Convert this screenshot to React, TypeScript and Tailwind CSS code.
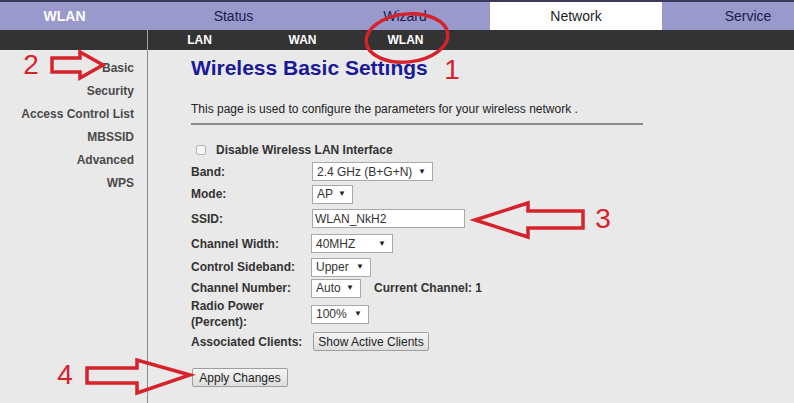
const FONT = "font-['Liberation_Sans',Arial,sans-serif]";

function FakeSelect({ value, width }: { value: string; width: string }) {
  return (
    <div
      className={`${width} h-[19px] flex items-center justify-between border border-[#a9a9a9] bg-white pl-[4px] pr-[6px] text-[12px] text-[#333]`}
    >
      <span>{value}</span>
      <span className="text-[8px] text-[#222]">▼</span>
    </div>
  );
}

function GrayButton({ label, width }: { label: string; width: string }) {
  return (
    <div
      className={`${width} h-[19px] flex items-center justify-center rounded-[2px] border border-[#9e9e9e] bg-gradient-to-b from-[#f6f6f6] to-[#dddddd] text-[12px] text-[#222]`}
    >
      {label}
    </div>
  );
}

function Row({ label, h, children }: { label: React.ReactNode; h: string; children?: React.ReactNode }) {
  return (
    <div className={`flex items-center ${h}`}>
      <div className="w-[120px] text-[12px] font-bold leading-[16px] text-[#333]">{label}</div>
      {children}
    </div>
  );
}

const sideLinks = ["Basic", "Security", "Access Control List", "MBSSID", "Advanced", "WPS"];

export default function App() {
  return (
    <div className={`relative h-[403px] w-[794px] overflow-hidden bg-[#e9e9e9] ${FONT}`}>
      {/* top tabs */}
      <div className="flex h-[30px] border-t-2 border-[#3a3a5a] bg-[#9999cc] text-[14px] leading-[28px] whitespace-nowrap">
        <div className="w-[147px] shrink-0 pr-[18px] text-center font-bold text-white">WLAN</div>
        <div className="w-[173px] shrink-0 text-center text-[#1c1c4c]">Status</div>
        <div className="w-[170px] shrink-0 text-center text-[#1c1c4c]">Wizard</div>
        <div className="w-[172px] shrink-0 bg-white text-center text-[#222]">Network</div>
        <div className="w-[172px] shrink-0 text-center text-[#1c1c4c]">Service</div>
      </div>

      {/* sub tabs */}
      <div className="flex h-[20px] bg-[#333333] text-[12px] font-bold leading-[20px] text-white">
        <div className="w-[148px] shrink-0 border-r border-[#a0a0a0]" />
        <div className="w-[103px] text-center">LAN</div>
        <div className="w-[103px] text-center">WAN</div>
        <div className="w-[103px] text-center">WLAN</div>
      </div>

      <div className="flex h-[353px]">
        {/* sidebar */}
        <div className="w-[148px] shrink-0 border-r border-[#8c8c8c] pt-[7px] pr-[13px] text-right">
          {sideLinks.map((l) => (
            <div key={l} className="text-[12px] font-bold leading-[23px] text-[#4a4a4a]">
              {l}
            </div>
          ))}
        </div>

        {/* main */}
        <div className="flex-1 pl-[43px] pt-[7px]">
          <h1 className="text-[21px] font-bold leading-[22px] text-[#1a1a99]">Wireless Basic Settings</h1>
          <p className="mt-[22px] text-[12px] leading-[16px] text-[#222]">
            This page is used to configure the parameters for your wireless network .
          </p>
          <div className="mt-[6px] h-[2px] w-[452px] bg-[#8a8a8a]" />

          <div className="mt-[14px]">
            <div className="flex h-[22px] items-center pl-[5px]">
              <div className="h-[10px] w-[10px] rounded-[2px] border border-[#b5b5b5] bg-[#f5f5f5]" />
              <span className="ml-[10px] text-[12px] font-bold text-[#333]">Disable Wireless LAN Interface</span>
            </div>
            <Row label="Band:" h="h-[21px]">
              <div className="ml-[1px]">
                <FakeSelect value="2.4 GHz (B+G+N)" width="w-[121px]" />
              </div>
            </Row>
            <Row label="Mode:" h="h-[24px]">
              <div className="ml-[1px]">
                <FakeSelect value="AP" width="w-[41px]" />
              </div>
            </Row>
            <Row label="SSID:" h="h-[25px]">
              <div className="ml-[1px] flex h-[19px] w-[153px] items-center border border-[#a9a9a9] bg-white pl-[2px] text-[12px] text-[#333]">
                WLAN_NkH2
              </div>
            </Row>
            <Row label="Channel Width:" h="h-[25px]">
              <FakeSelect value="40MHZ" width="w-[82px]" />
            </Row>
            <Row label="Control Sideband:" h="h-[22px]">
              <FakeSelect value="Upper" width="w-[60px]" />
            </Row>
            <Row label="Channel Number:" h="h-[20px]">
              <FakeSelect value="Auto" width="w-[50px]" />
              <span className="ml-[13px] text-[12px] font-bold text-[#333]">Current Channel: 1</span>
            </Row>
            <Row
              label={
                <>
                  Radio Power
                  <br />
                  (Percent):
                </>
              }
              h="h-[32px]"
            >
              <FakeSelect value="100%" width="w-[58px]" />
            </Row>
            <Row label="Associated Clients:" h="h-[23px]">
              <div className="ml-[2px]">
                <GrayButton label="Show Active Clients" width="w-[116px]" />
              </div>
            </Row>
            <div className="mt-[15px] ml-[1px]">
              <GrayButton label="Apply Changes" width="w-[96px]" />
            </div>
          </div>
        </div>
      </div>

      {/* red annotations */}
      <svg
        className="pointer-events-none absolute left-0 top-0"
        width="794"
        height="403"
        viewBox="0 0 794 403"
      >
        <g fill="none" stroke="#d6222a" strokeWidth="3.5" strokeLinejoin="miter">
          <ellipse cx="407" cy="38" rx="41" ry="24" transform="rotate(-6 407 38)" />
          <path d="M52,58 L80,58 L80,52 L103,65 L80,78 L80,72 L52,72 Z" />
          <path d="M475,220 L528,203 L528,211 L583,211 L583,228 L528,228 L528,237 Z" />
          <path d="M87,368 L137,368 L137,360 L190,375 L137,393 L137,383 L87,383 Z" />
        </g>
        <g fill="#d6222a" fontFamily="'Liberation Sans', Arial, sans-serif" fontSize="28" textAnchor="middle">
          <text x="31" y="74">2</text>
          <text x="452" y="79">1</text>
          <text x="603" y="228">3</text>
          <text x="65" y="384">4</text>
        </g>
      </svg>
    </div>
  );
}
